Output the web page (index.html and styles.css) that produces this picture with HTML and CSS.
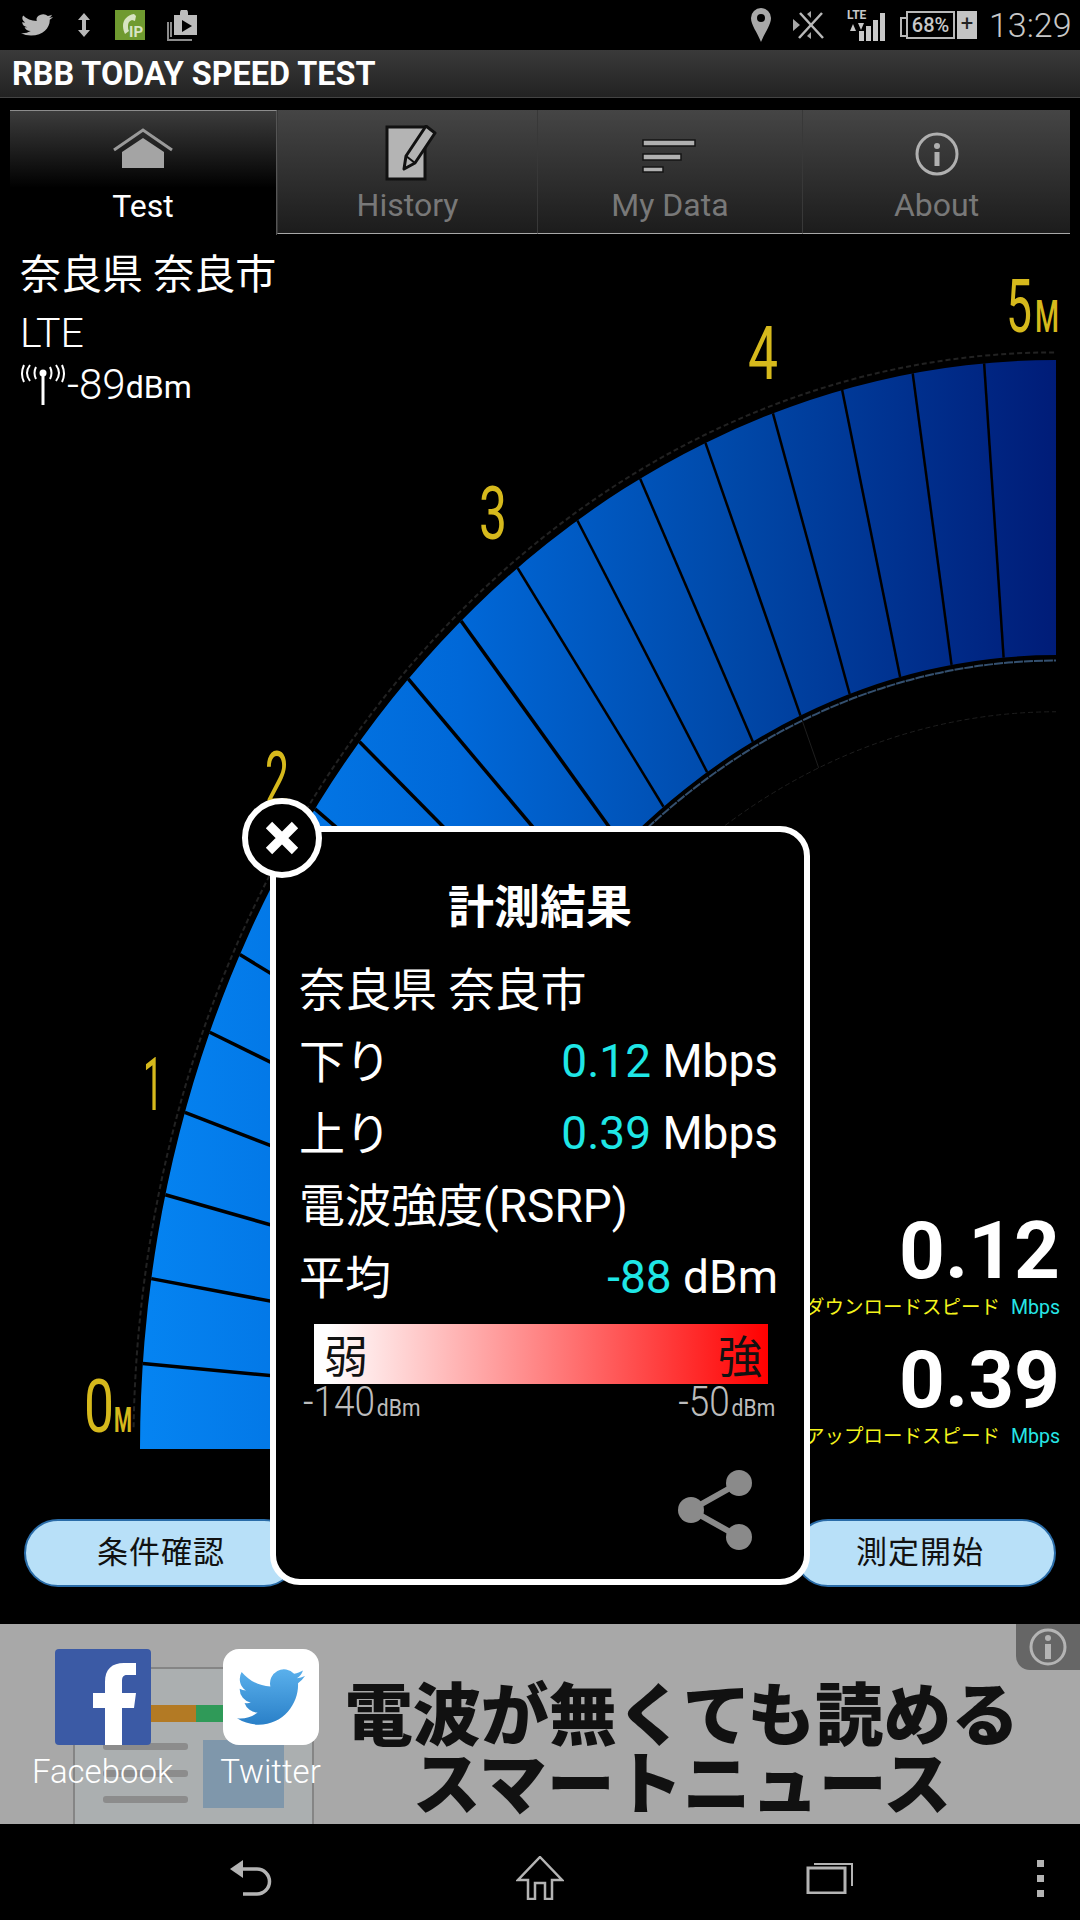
FILE: index.html

```html
<!DOCTYPE html>
<html lang="ja">
<head>
  <meta charset="UTF-8" />
  <meta name="viewport" content="width=device-width, initial-scale=1.0"/>
  <title>RBB TODAY SPEED TEST</title>
  <link rel="stylesheet" href="styles.css">
</head>
<body>
  <svg class="defs" width="0" height="0">
    <defs>
      <symbol id="bird" viewBox="0 0 24 24">
        <path d="M23.953 4.57a10 10 0 01-2.825.775 4.958 4.958 0 002.163-2.723c-.951.555-2.005.959-3.127 1.184a4.92 4.92 0 00-8.384 4.482C7.69 8.095 4.067 6.13 1.64 3.162a4.822 4.822 0 00-.666 2.475c0 1.71.87 3.213 2.188 4.096a4.904 4.904 0 01-2.228-.616v.06a4.923 4.923 0 003.946 4.827 4.996 4.996 0 01-2.212.085 4.936 4.936 0 004.604 3.417 9.867 9.867 0 01-6.102 2.105c-.39 0-.779-.023-1.17-.067a13.995 13.995 0 007.557 2.209c9.053 0 13.998-7.496 13.998-13.985 0-.21 0-.42-.015-.63A9.935 9.935 0 0024 4.59z"/>
      </symbol>
      <linearGradient id="gaugeFill" x1="0" y1="0" x2="1" y2="0">
        <stop offset="0" stop-color="#0584f2"/>
        <stop offset="0.35" stop-color="#0068d8"/>
        <stop offset="0.65" stop-color="#0048a8"/>
        <stop offset="1" stop-color="#001c78"/>
      </linearGradient>
      <linearGradient id="birdFill" x1="0" y1="0" x2="0" y2="1">
        <stop offset="0" stop-color="#5ab0ec"/>
        <stop offset="1" stop-color="#2a80c8"/>
      </linearGradient>
    </defs>
  </svg>

  <!-- status bar -->
  <div class="status-bar">
    <div class="status-left">
      <svg class="ic-bird" width="32" height="26" viewBox="0 0 24 24" preserveAspectRatio="none"><use href="#bird"/></svg>
      <svg width="18" height="24" viewBox="0 0 18 24"><path d="M9 0l6 7h-4v10h4l-6 7-6-7h4V7H3z"/></svg>
      <svg width="30" height="30" viewBox="0 0 30 30"><rect width="30" height="30" fill="#6f9a30"/><path d="M19 4c-7 1-11 6-11 12 0 3 1 6 2 8l4-3c-1-2-1-3-1-5 0-3 1-5 4-6l3 1 1-5z" fill="#d8e4c4"/><text class="ip-text" x="14" y="27">IP</text></svg>
      <svg width="31" height="31" viewBox="0 0 31 31"><path d="M1 12v18h24M4 12v15" fill="none" stroke="#8c8c8c" stroke-width="2"/><path d="M7 5h6V3a4 4 0 018 0v2h9v20H7z" fill="#bcbcbc"/><path d="M15 10l10 6-10 6z" fill="#000"/></svg>
    </div>
    <div class="status-right">
      <svg width="20" height="34" viewBox="0 0 20 34"><path d="M10 0a10 10 0 0110 10c0 7-6 14-10 24C6 24 0 17 0 10A10 10 0 0110 0z" fill="#a8a8a8"/><circle cx="10" cy="10" r="4" fill="#000"/></svg>
      <svg width="32" height="30" viewBox="0 0 32 30"><path d="M7 3l23 25M29 3L6 28" stroke="#b8b8b8" stroke-width="2.500"/><path d="M0 9l7 6-7 6zM18 1v7l-4-4zM14 26l4-4v7z" fill="#a8a8a8"/></svg>
      <div class="lte">
        <span class="lte-text">LTE</span>
        <svg class="lte-arrows" width="14" height="10" viewBox="0 0 14 10"><path d="M0 9l3-7 3 7zM8 1l3 7 3-7z" fill="#c8c8c8"/></svg>
        <svg class="lte-bars" width="32" height="28" viewBox="0 0 32 28"><path d="M6 18h5v10H6zM13 13h5v15h-5zM20 7h5v21h-5zM27 0h5v28h-5z" fill="#c8c8c8"/></svg>
      </div>
      <div class="battery"><span class="battery-body">68%</span><span class="battery-plug">+</span></div>
      <span class="clock">13:29</span>
    </div>
  </div>

  <div class="title-bar">RBB TODAY SPEED TEST</div>

  <!-- tabs -->
  <div class="tabs">
    <div class="tab active">
      <svg width="60" height="56" viewBox="0 0 60 56"><path d="M1 24L30 4l29 20" fill="none" stroke="#9a9a9a" stroke-width="3"/><path d="M9 26L30 12l21 14v16H9z" fill="#a4a4a4"/></svg>
      <span>Test</span>
    </div>
    <div class="tab">
      <svg width="60" height="56" viewBox="0 0 60 56"><rect x="9" y="2" width="38" height="52" fill="#b4b4b4" stroke="#111" stroke-width="3"/><path d="M48 1l9 7-20 30-11 6 2-13z" fill="#b4b4b4" stroke="#111" stroke-width="3" stroke-linejoin="round"/><path d="M28 31l9 7" stroke="#111" stroke-width="2"/></svg>
      <span>History</span>
    </div>
    <div class="tab">
      <svg width="60" height="56" viewBox="0 0 60 56"><path d="M3 15h52v6H3zM3 29h38v6H3zM3 42h20v5H3z" fill="#b0b0b0" stroke="#141414" stroke-width="1.500"/></svg>
      <span>My Data</span>
    </div>
    <div class="tab">
      <svg width="60" height="56" viewBox="0 0 60 56"><circle cx="30" cy="29" r="20" fill="none" stroke="#b0b0b0" stroke-width="3"/><rect x="27.500" y="27" width="5" height="14" fill="#b0b0b0"/><circle cx="30" cy="21" r="3" fill="#b0b0b0"/></svg>
      <span>About</span>
    </div>
  </div>

  <div class="main">
    <!-- gauge, coordinates are page coordinates -->
    <svg class="gauge" width="1080" height="1391" viewBox="0 233 1080 1391">
      <g transform="translate(1056 1447) scale(916 1089)">
        <path d="M-1 0A1 1 0 0 1 0 -1V-.729A.729 .729 0 0 0 -.729 0Z" fill="url(#gaugeFill)"/>
        <path class="arc-out" d="M-1.007 -.02A1.007 1.007 0 0 1 0 -1.007"/>
        <path class="arc-in" d="M-.724 0A.724 .724 0 0 1 0 -.724"/>
        <path class="arc-far" d="M-.677 0A.677 .677 0 0 1 0 -.677"/>
        <line class="tick-far" x1="0" y1="-.724" x2="0" y2="-.677" transform="rotate(-22.5)"/>
        <g class="ticks thin">
          <line x1="0" y1="-1" x2="0" y2="-.729" transform="rotate(-4.5)"/>
          <line x1="0" y1="-1" x2="0" y2="-.729" transform="rotate(-9)"/>
          <line x1="0" y1="-1" x2="0" y2="-.729" transform="rotate(-13.5)"/>
          <line x1="0" y1="-1" x2="0" y2="-.729" transform="rotate(-18)"/>
          <line x1="0" y1="-1" x2="0" y2="-.729" transform="rotate(-22.5)"/>
          <line x1="0" y1="-1" x2="0" y2="-.729" transform="rotate(-27)"/>
          <line x1="0" y1="-1" x2="0" y2="-.729" transform="rotate(-31.5)"/>
          <line x1="0" y1="-1" x2="0" y2="-.729" transform="rotate(-36)"/>
        </g>
        <g class="ticks">
          <line x1="0" y1="-1" x2="0" y2="-.729" transform="rotate(-40.5)"/>
          <line x1="0" y1="-1" x2="0" y2="-.729" transform="rotate(-45)"/>
          <line x1="0" y1="-1" x2="0" y2="-.729" transform="rotate(-49.5)"/>
          <line x1="0" y1="-1" x2="0" y2="-.729" transform="rotate(-54)"/>
          <line x1="0" y1="-1" x2="0" y2="-.729" transform="rotate(-58.5)"/>
          <line x1="0" y1="-1" x2="0" y2="-.729" transform="rotate(-63)"/>
          <line x1="0" y1="-1" x2="0" y2="-.729" transform="rotate(-67.500)"/>
          <line x1="0" y1="-1" x2="0" y2="-.729" transform="rotate(-72)"/>
          <line x1="0" y1="-1" x2="0" y2="-.729" transform="rotate(-76.500)"/>
          <line x1="0" y1="-1" x2="0" y2="-.729" transform="rotate(-81)"/>
          <line x1="0" y1="-1" x2="0" y2="-.729" transform="rotate(-85.500)"/>
        </g>
      </g>
      <g class="gauge-labels">
        <text x="84" y="1430" textLength="30" lengthAdjust="spacingAndGlyphs">0</text>
        <text class="unit" x="114" y="1430" textLength="18" lengthAdjust="spacingAndGlyphs">M</text>
        <text x="143" y="1108" textLength="20" lengthAdjust="spacingAndGlyphs">1</text>
        <text x="265" y="802" textLength="24" lengthAdjust="spacingAndGlyphs">2</text>
        <text x="479" y="537" textLength="28" lengthAdjust="spacingAndGlyphs">3</text>
        <text x="748" y="377" textLength="30" lengthAdjust="spacingAndGlyphs">4</text>
        <text x="1006" y="330" textLength="26" lengthAdjust="spacingAndGlyphs">5</text>
        <text class="unit big" x="1035" y="330" textLength="24" lengthAdjust="spacingAndGlyphs">M</text>
      </g>
    </svg>

    <div class="info">
      <div class="info-line">奈良県 奈良市</div>
      <div class="info-line lte-line">LTE</div>
      <div class="info-signal">
        <svg width="44" height="42" viewBox="0 0 44 42"><path d="M22 10v32" stroke="#fff" stroke-width="3"/><circle cx="22" cy="10" r="3.500" fill="#fff"/><path d="M15 4q-3 6 0 12M29 4q3 6 0 12M9 2q-6 8 0 16M35 2q6 8 0 16M3 2q-4 9 0 17M41 2q4 9 0 17" fill="none" stroke="#fff" stroke-width="2"/></svg>
        <span class="signal-value">-89</span><span class="signal-unit">dBm</span>
      </div>
    </div>

    <div class="speeds">
      <div class="speed-value">0.12</div>
      <div class="speed-label">ダウンロードスピード<span>Mbps</span></div>
      <div class="speed-value second">0.39</div>
      <div class="speed-label">アップロードスピード<span>Mbps</span></div>
    </div>

    <div class="buttons">
      <div class="btn">条件確認</div>
      <div class="btn start">測定開始</div>
    </div>

    <!-- result popup -->
    <div class="popup">
      <div class="close">
        <svg width="36" height="36" viewBox="0 0 36 36"><path d="M5 5l26 26M31 5L5 31" stroke="#fff" stroke-width="9"/></svg>
      </div>
      <h2 class="popup-title">計測結果</h2>
      <div class="row"><span>奈良県 奈良市</span></div>
      <div class="row"><span>下り</span><span><b>0.12</b> Mbps</span></div>
      <div class="row"><span>上り</span><span><b>0.39</b> Mbps</span></div>
      <div class="row"><span>電波強度(RSRP)</span></div>
      <div class="row"><span>平均</span><span><b>-88</b> dBm</span></div>
      <div class="meter"><span>弱</span><span>強</span></div>
      <div class="meter-scale">
        <span class="scale-low">-140<small>dBm</small></span>
        <span class="scale-high">-50<small>dBm</small></span>
      </div>
      <div class="share">
        <svg width="76" height="82" viewBox="0 0 76 82"><path d="M62 14L14 41l48 27" fill="none" stroke="#8a8a8a" stroke-width="6"/><circle cx="62" cy="14" r="13" fill="#8a8a8a"/><circle cx="14" cy="41" r="13" fill="#8a8a8a"/><circle cx="62" cy="68" r="13" fill="#8a8a8a"/></svg>
      </div>
    </div>
  </div>

  <!-- ad banner -->
  <div class="ad">
    <svg class="ad-art" width="320" height="200" viewBox="0 0 320 200">
      <rect x="74" y="44" width="239" height="170" fill="#abafb0" stroke="#858585" stroke-width="2"/>
      <rect x="151" y="81" width="45" height="17" fill="#b37a24"/>
      <rect x="196" y="81" width="40" height="17" fill="#2f9a58"/>
      <rect x="203" y="116" width="81" height="68" fill="#7f97ab"/>
      <rect x="103" y="119" width="85" height="7" rx="3" fill="#8c8c8c"/>
      <rect x="103" y="146" width="85" height="7" rx="3" fill="#8c8c8c"/>
      <rect x="103" y="172" width="85" height="7" rx="3" fill="#8c8c8c"/>
    </svg>
    <div class="ad-copy">
      <div>電波が無くても読める</div>
      <div>スマートニュース</div>
    </div>
    <div class="ad-badge">
      <svg width="42" height="42" viewBox="0 0 42 42"><circle cx="21" cy="21" r="17" fill="none" stroke="#b4b4b4" stroke-width="3"/><rect x="18" y="18" width="6" height="15" fill="#b4b4b4"/><circle cx="21" cy="12" r="3" fill="#b4b4b4"/></svg>
    </div>
    <div class="share-bar">
      <div class="share-item">
        <div class="share-icon fb">
          <svg width="96" height="96" viewBox="0 0 96 96"><path d="M50 96V59H38V44H50V33C50 20 57 14 69 14H81V26H72C68 26 67 28 67 33V44H81L79 59H67V96Z" fill="#fff"/></svg>
        </div>
        <span>Facebook</span>
      </div>
      <div class="share-item">
        <div class="share-icon tw">
          <svg width="68" height="68" viewBox="0 0 24 24" fill="url(#birdFill)"><use href="#bird"/></svg>
        </div>
        <span>Twitter</span>
      </div>
    </div>
  </div>

  <!-- nav bar -->
  <div class="nav">
    <svg class="nav-back" width="48" height="36" viewBox="0 0 48 36"><path d="M14 0v18L1 9z" fill="#b4b4b4"/><path d="M12 9h16a12 12 0 010 25H14" fill="none" stroke="#b4b4b4" stroke-width="3.500"/></svg>
    <svg width="48" height="44" viewBox="0 0 48 44"><path d="M24 1L46 24H36V43H29V27H19V43H12V24H2z" fill="none" stroke="#b4b4b4" stroke-width="2.500"/></svg>
    <svg width="48" height="32" viewBox="0 0 48 32"><rect x="2" y="6" width="37" height="25" fill="none" stroke="#b4b4b4" stroke-width="3"/><path d="M8 2h38v22" fill="none" stroke="#b4b4b4" stroke-width="2"/></svg>
    <div class="menu-dots"><i></i><i></i><i></i></div>
  </div>
</body>
</html>
```

FILE: styles.css

```css
* {
  margin: 0;
  padding: 0;
  box-sizing: border-box;
}

html, body {
  width: 1080px;
  height: 1920px;
  overflow: hidden;
  background-color: black;
  color: white;
  font-family: Roboto, 'Noto Sans CJK JP', sans-serif;
}

body {
  display: flex;
  flex-direction: column;
}

.defs {
  position: absolute;
}

/* status bar */
.status-bar {
  height: 50px;
  display: flex;
  justify-content: space-between;
  align-items: center;
  padding: 0 13px 0 21px;
  fill: #b8b8b8;
}

.status-left {
  display: flex;
  align-items: center;
  gap: 22px;
}

.ip-text {
  fill: #d8e4c4;
  font-size: 15px;
  font-weight: 700;
}

.status-right {
  display: flex;
  align-items: center;
  gap: 22px;
}

.lte {
  position: relative;
  width: 38px;
  height: 32px;
}

.lte-text {
  position: absolute;
  left: 0;
  top: -1px;
  font-size: 12px;
  font-weight: 700;
  line-height: 14px;
  color: #c8c8c8;
}

.lte-arrows {
  position: absolute;
  left: 3px;
  top: 13px;
}

.lte-bars {
  position: absolute;
  right: 0;
  bottom: 0;
}

.battery {
  position: relative;
  display: flex;
  align-items: stretch;
  height: 28px;
  margin-left: -1px;
  margin-right: -10px;
}

.battery::before {
  content: "";
  position: absolute;
  left: -6px;
  top: 6px;
  width: 6px;
  height: 16px;
  border: 2px solid #b8b8b8;
  border-right: 0;
}

.battery-body {
  width: 49px;
  border: 2px solid #b8b8b8;
  font-size: 20px;
  font-weight: 500;
  line-height: 24px;
  text-align: center;
  color: #c8c8c8;
  margin-right: 2px;
}

.battery-plug {
  width: 20px;
  background: #c4c4c4;
  color: #222;
  font-size: 22px;
  line-height: 26px;
  text-align: center;
}

.clock {
  font-size: 34px;
  font-weight: 300;
  color: #c8c8c8;
  width: 78px;
  white-space: nowrap;
}

/* title */
.title-bar {
  height: 48px;
  padding-left: 12px;
  font-size: 32.4px;
  font-weight: 700;
  line-height: 49px;
  background: linear-gradient(to bottom, #3a3a3a, #222222);
  border-bottom: 1px solid #444;
}

/* tabs */
.tabs {
  display: grid;
  grid-template-columns: 267px 260px 265px 268px;
  margin: 12px 10px 0;
  height: 125px;
  flex-shrink: 0;
}

.tab {
  display: flex;
  flex-direction: column;
  align-items: center;
  padding-top: 15px;
  height: 124px;
  background: linear-gradient(to bottom, #454545, #1c1c1c);
  border-bottom: 1px solid #a8a8a8;
  border-left: 1px solid #383838;
  font-size: 32px;
  line-height: 40px;
  color: #787878;
}

.tab svg {
  margin-bottom: 4px;
}

.tab.active {
  height: 125px;
  background: linear-gradient(to bottom, #3c3c3c, #000 62%);
  border-top: 1px solid #8c8c8c;
  border-left: 0;
  border-bottom: 0;
  border-right: 1px solid #555;
  color: white;
}

/* main area */
.main {
  position: relative;
  flex: 1;
  display: flex;
  flex-direction: column;
  padding-bottom: 37px;
}

.gauge {
  position: absolute;
  left: 0;
  top: 0;
}

.arc-out, .arc-in, .arc-far {
  fill: none;
  vector-effect: non-scaling-stroke;
}

.arc-out {
  stroke: #222;
  stroke-width: 2;
  stroke-dasharray: 5 3;
}

.arc-in {
  stroke: #34506f;
  stroke-width: 2;
  stroke-dasharray: 9 1;
}

.arc-far {
  stroke: #1e1e1e;
  stroke-width: 1;
  stroke-dasharray: 5 3;
}

.tick-far {
  stroke: #1e1e1e;
  stroke-width: 1;
  vector-effect: non-scaling-stroke;
}

.ticks line {
  stroke: #000;
  stroke-width: 3.5;
  vector-effect: non-scaling-stroke;
}

.ticks.thin line {
  stroke-width: 2.5;
}

.gauge-labels text {
  fill: #d6b91c;
  font-size: 74px;
}

.gauge-labels .unit {
  font-size: 35px;
  font-weight: 700;
}

.gauge-labels .unit.big {
  font-size: 45px;
  font-weight: 500;
}

.info {
  position: relative;
  padding: 11px 0 0 20px;
}

.info-line {
  font-size: 41px;
  line-height: 58px;
  height: 58px;
}

.lte-line {
  height: 56px;
  font-size: 41px;
  font-weight: 300;
}

.info-signal {
  display: flex;
  align-items: center;
  height: 48px;
  padding-left: 1px;
}

.signal-value {
  font-size: 42px;
  margin-left: 2px;
  font-weight: 300;
}

.signal-unit {
  font-size: 32px;
  margin-top: 6px;
}

/* speed readout */
.speeds {
  position: relative;
  margin-top: auto;
  padding-right: 20px;
  text-align: right;
}

.speed-value {
  font-size: 80px;
  font-weight: 700;
  line-height: 80px;
}

.speed-value.second {
  margin-top: 20px;
}

.speed-label {
  margin-top: 5px;
  font-size: 19.5px;
  line-height: 24px;
  color: #f4f41c;
  white-space: nowrap;
}

.speed-label span {
  margin-left: 11px;
  color: #26e6e6;
}

.buttons {
  position: relative;
  display: flex;
  justify-content: space-between;
  margin-top: 70px;
  padding: 0 24px;
}

.btn {
  width: 274px;
  height: 68px;
  border: 2px solid #2a6ca8;
  border-radius: 34px;
  background: #b8e0f8;
  color: #111;
  font-size: 31px;
  line-height: 64px;
  text-align: center;
  letter-spacing: 1px;
}

.btn.start {
  width: 262px;
  padding-right: 10px;
}

/* popup */
.popup {
  position: absolute;
  left: 270px;
  top: 591px;
  width: 540px;
  height: 759px;
  padding: 40px 26px 0;
  background: black;
  border: 6px solid white;
  border-radius: 30px;
}

.close {
  position: absolute;
  left: -34px;
  top: -34px;
  width: 80px;
  height: 80px;
  display: flex;
  align-items: center;
  justify-content: center;
  background: black;
  border: 6px solid white;
  border-radius: 50%;
}

.popup-title {
  font-size: 46px;
  font-weight: 700;
  line-height: 70px;
  text-align: center;
  margin-bottom: 11px;
}

.row {
  display: flex;
  justify-content: space-between;
  align-items: center;
  height: 72px;
  font-size: 46px;
  white-space: nowrap;
}

.row span:first-child {
  margin: 0 0 7px -3px;
}

.row b {
  font-weight: 400;
  color: #1fe6e6;
}

.meter {
  display: flex;
  justify-content: space-between;
  align-items: center;
  height: 60px;
  margin: 11px 10px 0 12px;
  padding: 0 6px 0 10px;
  background: linear-gradient(to right, #fff 3%, #ff0000);
  color: #111;
  font-size: 44px;
}

.meter-scale {
  display: flex;
  justify-content: space-between;
  height: 32px;
  margin: 2px 3px 0 1px;
  font-size: 42px;
  font-weight: 300;
  line-height: 32px;
  color: #bcbcbc;
  white-space: nowrap;
}

.scale-low {
  transform: scaleX(.88);
  transform-origin: left;
}

.scale-high {
  transform: scaleX(.88);
  transform-origin: right;
}

.meter-scale small {
  font-size: 24px;
  font-weight: 400;
  margin-left: 2px;
}

.share {
  display: flex;
  justify-content: flex-end;
  margin-top: 51px;
  padding-right: 25px;
}

/* ad */
.ad {
  position: relative;
  height: 200px;
  flex-shrink: 0;
  background: #a8a8a8;
  padding: 59px 64px 0 0;
}

.ad-art {
  position: absolute;
  left: 0;
  top: 0;
}

.ad-copy {
  position: relative;
  width: 680px;
  margin-left: auto;
  margin-right: -6px;
  text-align: center;
  font-size: 68px;
  font-weight: 900;
  line-height: 69px;
  color: #111;
  white-space: nowrap;
}

.ad-badge {
  position: absolute;
  right: 0;
  top: 0;
  width: 64px;
  height: 46px;
  display: flex;
  align-items: center;
  justify-content: center;
  background: #666;
  border-bottom-left-radius: 14px;
}

.share-bar {
  position: absolute;
  left: 33px;
  top: 25px;
  display: flex;
  gap: 29px;
}

.share-item {
  width: 139px;
  display: flex;
  flex-direction: column;
  align-items: center;
  font-size: 33px;
  font-weight: 300;
  line-height: 36px;
}

.share-icon {
  width: 96px;
  height: 96px;
  margin-bottom: 9px;
  display: flex;
  align-items: center;
  justify-content: center;
  overflow: hidden;
}

.share-icon.fb {
  background: #3b5aa5;
  border-radius: 4px;
}

.share-icon.tw {
  background: white;
  border-radius: 16px;
}

/* nav */
.nav {
  height: 96px;
  flex-shrink: 0;
  display: grid;
  grid-template-columns: 290px 290px 290px auto;
  align-items: center;
  justify-items: center;
  padding-left: 105px;
  padding-top: 12px;
}

.nav-back {
  margin-left: 6px;
}

.menu-dots {
  justify-self: end;
  margin-right: 36px;
  display: flex;
  flex-direction: column;
  gap: 8px;
}

.menu-dots i {
  display: block;
  width: 7px;
  height: 7px;
  background: #b4b4b4;
}
```
